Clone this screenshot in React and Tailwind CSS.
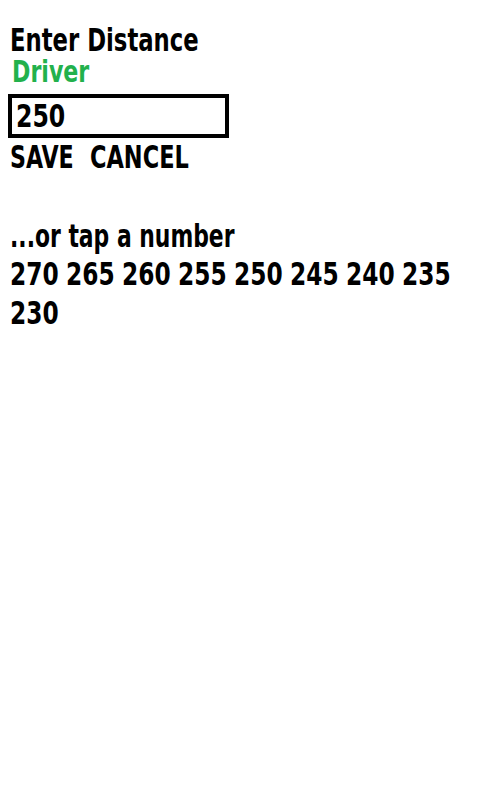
const font = { fontFamily: '"DejaVu Sans Condensed", "DejaVu Sans", sans-serif' };

// the reference face is a narrow, heavy one; squeeze DejaVu Condensed to match
const Narrow = ({ children, className = "scale-x-[0.82]" }) => (
  <span className={`inline-block origin-left whitespace-nowrap ${className}`}>{children}</span>
);

export default function App() {
  const numbers = [270, 265, 260, 255, 250, 245, 240, 235, 230];
  return (
    <div className="min-h-[800px] bg-white text-black px-[10px] pt-[24px] font-bold" style={font}>
      <div className="text-[32px] leading-[32px]">
        <Narrow className="scale-x-[0.79]">Enter Distance</Narrow>
      </div>
      <div className="text-[30px] leading-[32px] text-[#22b14c] pl-[2px]">
        <Narrow>Driver</Narrow>
      </div>
      <div className="mt-[6px] -ml-[2px] w-[221px] h-[44px] border-4 border-black flex items-center pl-[4px] text-[32px]">
        <Narrow>250</Narrow>
      </div>
      <div className="flex text-[32px] leading-[32px] mt-[3px]">
        <span className="w-[80px]">
          <Narrow className="scale-x-[0.77]">SAVE</Narrow>
        </span>
        <span>
          <Narrow className="scale-x-[0.78]">CANCEL</Narrow>
        </span>
      </div>
      <div className="mt-[44px] text-[32px] leading-[38px]">
        <Narrow className="scale-x-[0.76]">...or tap a number</Narrow>
      </div>
      <div className="flex flex-wrap gap-x-[7px] text-[32px] leading-[39px] max-w-[470px]">
        {numbers.map((n) => (
          <span key={n} className="w-[49px]">
            <Narrow className="scale-x-[0.81]">{n}</Narrow>
          </span>
        ))}
      </div>
    </div>
  );
}
